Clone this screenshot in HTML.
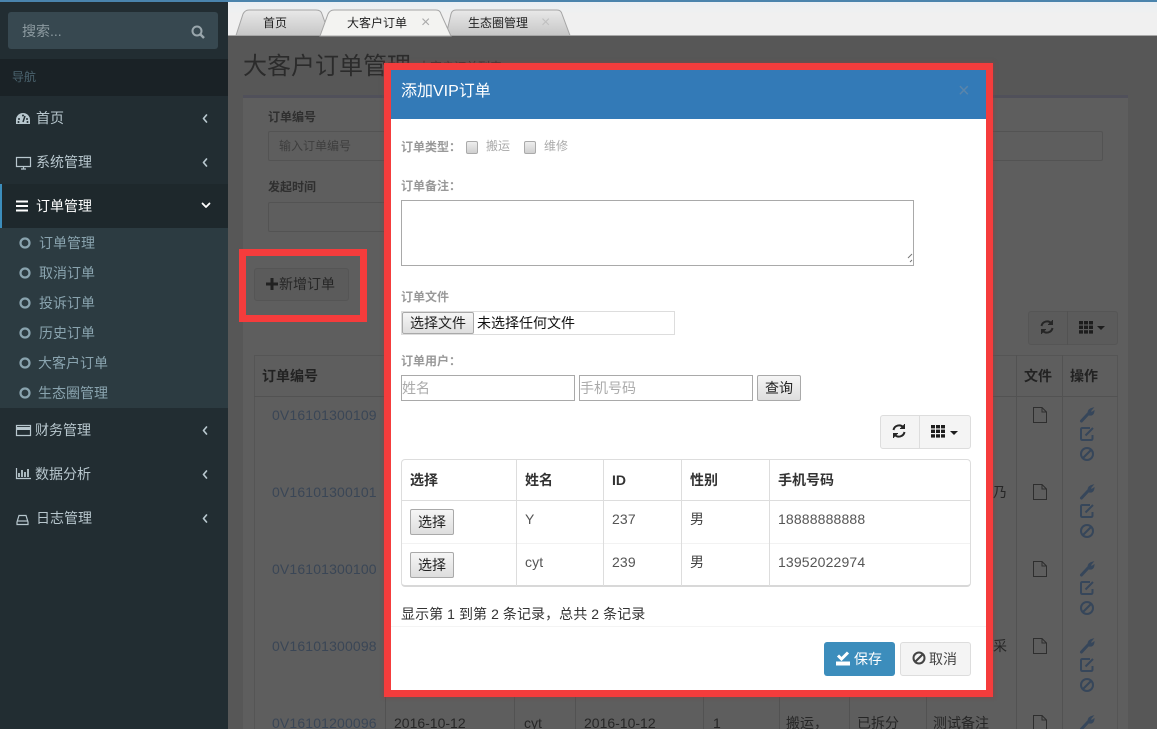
<!DOCTYPE html>
<html lang="zh"><head><meta charset="utf-8"><title>大客户订单管理</title>
<style>
html,body{margin:0;padding:0;width:1157px;height:729px;overflow:hidden;background:#575757}
body{position:relative;font-family:"Liberation Sans","Noto Sans CJK SC",sans-serif;font-size:14px}
.a{position:absolute;box-sizing:border-box}
.t{position:absolute;line-height:20px;height:20px;white-space:nowrap}
svg.o{position:absolute;left:0;top:0;width:1157px;height:729px;pointer-events:none}
.nav{color:#b8c7ce;margin-top:1px}.sub{color:#8aa4af;margin-top:1px}
.lb{font-weight:bold;font-size:12px;color:#999;margin-top:1px}
.dl{font-weight:bold;font-size:12px;color:#2f2f2f}
.id{color:#3a4656;font-size:14px;letter-spacing:.15px}
.dk{color:#262626}
.th{font-weight:bold;color:#333}
.td{color:#555;letter-spacing:.15px}
.ln{position:absolute;background:#525252}
.btn{position:absolute;box-sizing:border-box;border:1px solid #a9a9a9;border-radius:2px;background:linear-gradient(#f6f6f6,#dedede);color:#222;text-align:center;font-size:14px}
.inp{position:absolute;box-sizing:border-box;border:1px solid #a9a9a9;background:#fff}
.cb{position:absolute;box-sizing:border-box;width:12px;height:13px;border:1px solid #aaa;border-radius:2px;background:linear-gradient(#eee,#cfcfcf)}
.cl{position:absolute;background:#ddd;width:1px}
</style></head><body>

<!-- sidebar -->
<div class="a" style="left:0;top:0;width:228px;height:729px;background:#222d32"></div>
<div class="a" style="left:0;top:0;width:228px;height:2px;background:#4a84ad"></div>
<div class="a" style="left:8px;top:12px;width:210px;height:37px;background:#374850;border-radius:3px"></div>
<div class="t" style="left:22px;top:21px;color:#8d9ba1">搜索...</div>
<div class="a" style="left:0;top:59px;width:228px;height:37px;background:#1a2226"></div>
<div class="t" style="left:12px;top:67px;font-size:12px;color:#4b646f">导航</div>
<div class="a" style="left:0;top:184px;width:228px;height:44px;background:#1e282c;border-left:2px solid #3c8dbc"></div>
<div class="a" style="left:0;top:228px;width:228px;height:180px;background:#2c3b41"></div>
<div class="t nav" style="left:36px;top:107px">首页</div>
<div class="t nav" style="left:36px;top:151px">系统管理</div>
<div class="t" style="left:36px;top:196px;color:#fff">订单管理</div>
<div class="t sub" style="left:39px;top:232px">订单管理</div>
<div class="t sub" style="left:39px;top:262px">取消订单</div>
<div class="t sub" style="left:39px;top:292px">投诉订单</div>
<div class="t sub" style="left:39px;top:322px">历史订单</div>
<div class="t sub" style="left:38px;top:352px">大客户订单</div>
<div class="t sub" style="left:38px;top:382px">生态圈管理</div>
<div class="t nav" style="left:35px;top:419px">财务管理</div>
<div class="t nav" style="left:35px;top:463px">数据分析</div>
<div class="t nav" style="left:36px;top:507px">日志管理</div>

<!-- tab bar -->
<div class="a" style="left:228px;top:0;width:929px;height:36px;background:linear-gradient(#e9eff4 3px,#f0f0f0 14px);border-bottom:1px solid #a8a8a8"></div>
<div class="a" style="left:228px;top:0;width:929px;height:2px;background:#4a84ad"></div>
<svg class="o" viewBox="0 0 1157 729">
<defs><linearGradient id="g" x1="0" y1="0" x2="0" y2="1"><stop offset="0" stop-color="#e9e9e9"/><stop offset="1" stop-color="#c6c6c6"/></linearGradient></defs>
<path d="M236 35.500L243 14Q245 10 249 10H316Q321 10 322 14L327 28V35.500Z" fill="url(#g)" stroke="#a5a5a5"/>
<path d="M446 35.500L451 14Q452 10 456 10H557Q561 10 562 14L570 35.500Z" fill="url(#g)" stroke="#a5a5a5"/>
<path d="M320 36L328 14Q330 10 334 10H436Q440 10 441 14L451 36Z" fill="#f3f3f1" stroke="#a5a5a5"/>
</svg>
<div class="t" style="left:263px;top:13px;font-size:12px;color:#222">首页</div>
<div class="t" style="left:347px;top:13px;font-size:12px;color:#222">大客户订单</div>
<div class="t" style="left:421px;top:13px;font-size:16px;color:#aaa">×</div>
<div class="t" style="left:468px;top:13px;font-size:12px;color:#222">生态圈管理</div>
<div class="t" style="left:541px;top:13px;font-size:16px;color:#c0c0c0">×</div>

<!-- dimmed page -->
<div class="t" style="left:243px;top:53px;height:28px;line-height:28px;font-size:24px;color:#2b2b2b">大客户订单管理</div>
<div class="t" style="left:418px;top:57px;font-size:12px;color:#333">大客户订单列表</div>
<div class="a" style="left:243px;top:95px;width:885px;height:634px;background:#5e5e5e;border-top:3px solid #50505a"></div>
<div class="t dl" style="left:268px;top:107px">订单编号</div>
<div class="a" style="left:268px;top:131px;width:835px;height:30px;border:1px solid #535353;border-radius:2px"></div>
<div class="t" style="left:279px;top:136px;font-size:12px;color:#3e3e3e">输入订单编号</div>
<div class="t dl" style="left:268px;top:177px">发起时间</div>
<div class="a" style="left:268px;top:202px;width:130px;height:30px;border:1px solid #535353;border-radius:2px"></div>
<div class="a" style="left:254px;top:268px;width:95px;height:33px;border:1px solid #555;border-radius:3px;background:#5b5b5b"></div>
<div class="t dk" style="left:279px;top:274px">新增订单</div>
<div class="a" style="left:1028px;top:311px;width:90px;height:34px;border:1px solid #555;border-radius:3px;background:#5b5b5b"></div>
<div class="ln" style="left:1067px;top:311px;width:1px;height:34px"></div>

<!-- dim table -->
<div class="a" style="left:254px;top:355px;width:864px;height:374px;border:1px solid #555;border-bottom:0"></div>
<div class="ln" style="left:254px;top:396px;width:864px;height:1px"></div>
<div class="ln" style="left:385px;top:355px;width:1px;height:374px"></div>
<div class="ln" style="left:514px;top:355px;width:1px;height:374px"></div>
<div class="ln" style="left:575px;top:355px;width:1px;height:374px"></div>
<div class="ln" style="left:703px;top:355px;width:1px;height:374px"></div>
<div class="ln" style="left:779px;top:355px;width:1px;height:374px"></div>
<div class="ln" style="left:849px;top:355px;width:1px;height:374px"></div>
<div class="ln" style="left:926px;top:355px;width:1px;height:374px"></div>
<div class="ln" style="left:1016px;top:355px;width:1px;height:374px"></div>
<div class="ln" style="left:1062px;top:355px;width:1px;height:374px"></div>
<div class="t dk" style="left:262px;top:366px;font-weight:bold;color:#222">订单编号</div>
<div class="t dk" style="left:1024px;top:366px;font-weight:bold;color:#222">文件</div>
<div class="t dk" style="left:1070px;top:366px;font-weight:bold;color:#222">操作</div>
<div class="t id" style="left:272px;top:405px">0V16101300109</div>
<div class="t id" style="left:272px;top:482px">0V16101300101</div>
<div class="t id" style="left:272px;top:559px">0V16101300100</div>
<div class="t id" style="left:272px;top:636px">0V16101300098</div>
<div class="t id" style="left:272px;top:713px">0V16101200096</div>
<div class="t dk" style="left:394px;top:713px">2016-10-12</div>
<div class="t dk" style="left:524px;top:713px">cyt</div>
<div class="t dk" style="left:584px;top:713px">2016-10-12</div>
<div class="t dk" style="left:713px;top:713px">1</div>
<div class="t dk" style="left:786px;top:713px">搬运，</div>
<div class="t dk" style="left:857px;top:713px">已拆分</div>
<div class="t dk" style="left:933px;top:713px">测试备注</div>
<div class="t dk" style="left:993px;top:482px">乃</div>
<div class="t dk" style="left:993px;top:636px">采</div>

<svg class="o" viewBox="0 0 1157 729">
<defs>
<g id="file" fill="none" stroke="#2e2e2e" stroke-width="1"><path d="M-6.500 -7.500H2L6.500 -3V7.500H-6.500Z"/><path d="M2 -7.500V-3H6.500"/></g>
<g id="wr"><path d="M-5.500 6L1 -1" stroke="#36465a" stroke-width="3" stroke-linecap="round"/><path d="M1 -2Q1 -6 6 -7L3.500 -4L4.500 -2.500L7 -4Q6.500 1 2 0Z" fill="#36465a" stroke="#36465a"/></g>
<g id="ed" fill="none" stroke="#36465a"><path d="M3 -6H-4.500Q-6 -6 -6 -4.500V4.500Q-6 6 -4.500 6H4Q5.500 6 5.500 4.500V1" stroke-width="2"/><path d="M-1.500 1.500L6 -6" stroke-width="2"/></g>
<g id="bn" fill="none" stroke="#36465a" stroke-width="2"><circle r="6"/><path d="M-4 4L4 -4"/></g>
<g id="th" fill="#1d1d1d"><rect x="0" y="0" width="4" height="3.400"/><rect x="5" y="0" width="4" height="3.400"/><rect x="10" y="0" width="4" height="3.400"/><rect x="0" y="4.600" width="4" height="3.400"/><rect x="5" y="4.600" width="4" height="3.400"/><rect x="10" y="4.600" width="4" height="3.400"/><rect x="0" y="9.200" width="4" height="3.400"/><rect x="5" y="9.200" width="4" height="3.400"/><rect x="10" y="9.200" width="4" height="3.400"/></g>
<g id="rf" fill="none" stroke="#262626" stroke-width="2"><path d="M-5.500 -1A5.700 5.700 0 0 1 4.500 -3.500"/><path d="M5.500 1A5.700 5.700 0 0 1 -4.500 3.500"/><path d="M5.500 -7V-2.500H1" fill="#262626" stroke-width="1"/><path d="M-5.500 7V2.500H-1" fill="#262626" stroke-width="1"/></g>
<g id="cd" fill="none" stroke="#b8c7ce" stroke-width="1.700" stroke-linecap="round" stroke-linejoin="round"><path d="M1.500 -3.500L-1.500 0L1.500 3.500"/></g>
</defs>
<!-- page icons -->
<path d="M266 284H278M272 278V290" stroke="#222" stroke-width="3"/>
<use href="#rf" x="1047" y="327"/><use href="#th" x="1079" y="321"/><path d="M1097 326H1105L1101 330Z" fill="#1d1d1d"/>
<use href="#file" x="1040" y="415"/><use href="#file" x="1040" y="492"/><use href="#file" x="1040" y="569"/><use href="#file" x="1040" y="646"/><use href="#file" x="1040" y="723"/>
<use href="#wr" x="1087" y="415"/><use href="#ed" x="1087" y="434"/><use href="#bn" x="1087" y="454"/>
<use href="#wr" x="1087" y="492"/><use href="#ed" x="1087" y="511"/><use href="#bn" x="1087" y="531"/>
<use href="#wr" x="1087" y="569"/><use href="#ed" x="1087" y="588"/><use href="#bn" x="1087" y="608"/>
<use href="#wr" x="1087" y="646"/><use href="#ed" x="1087" y="665"/><use href="#bn" x="1087" y="685"/>
<use href="#wr" x="1087" y="723"/>
<!-- sidebar icons -->
<circle cx="197" cy="31" r="4.500" fill="none" stroke="#9aa7ad" stroke-width="2"/><path d="M200.500 34.500L204 38" stroke="#9aa7ad" stroke-width="2.500"/>
<path d="M16 124V120A7 7 0 0 1 30 120V124Z" fill="#b8c7ce"/><path d="M23 122L25 116" stroke="#222d32" stroke-width="1.500"/><circle cx="19" cy="119" r="1" fill="#222d32"/><circle cx="27" cy="119" r="1" fill="#222d32"/><circle cx="23" cy="115.500" r="1" fill="#222d32"/><circle cx="18.500" cy="122" r="1" fill="#222d32"/><circle cx="27.500" cy="122" r="1" fill="#222d32"/>
<path d="M16.500 157.500H30.500V166.500H16.500Z" fill="none" stroke="#b8c7ce" stroke-width="1.200"/><path d="M21 169H26M23.500 167V169" stroke="#b8c7ce" stroke-width="1.200"/>
<path d="M16 201.500H28M16 206H28M16 210.500H28" stroke="#fff" stroke-width="2"/>
<path d="M16.500 425.500H30.500V435.500H16.500Z" fill="none" stroke="#b8c7ce" stroke-width="1.200"/><rect x="16" y="427" width="15" height="3" fill="#b8c7ce"/>
<path d="M16.500 468V478.500H31" fill="none" stroke="#b8c7ce" stroke-width="1.200"/><path d="M19 477V473M22 477V470M25 477V472M28 477V469" stroke="#b8c7ce" stroke-width="1.800"/>
<path d="M17 522L19 515.500H26L28 522V524.500H17Z" fill="none" stroke="#b8c7ce" stroke-width="1.200"/><path d="M17 521H28" stroke="#b8c7ce" stroke-width="1.200"/>
<use href="#cd" x="205" y="118.500"/><use href="#cd" x="205" y="162.500"/><use href="#cd" x="205" y="430.500"/><use href="#cd" x="205" y="474.500"/><use href="#cd" x="205" y="518.500"/>
<path d="M202.500 203.500L206 207L209.500 203.500" fill="none" stroke="#fff" stroke-width="1.800" stroke-linecap="round" stroke-linejoin="round"/>
<g fill="none" stroke="#8aa4af" stroke-width="2.200"><circle cx="25" cy="243" r="4.500"/><circle cx="25" cy="273" r="4.500"/><circle cx="25" cy="303" r="4.500"/><circle cx="25" cy="333" r="4.500"/><circle cx="25" cy="363" r="4.500"/><circle cx="25" cy="393" r="4.500"/></g>
</svg>

<!-- red annotation around add button -->
<div class="a" style="left:239px;top:249px;width:128px;height:73px;border:7px solid #f53c3c"></div>

<!-- modal -->
<div class="a" style="left:384px;top:63px;width:609px;height:634px;border:7px solid #f53c3c;background:#fff;box-shadow:0 0 3px 1px rgba(150,60,60,.5)"></div>
<div class="a" style="left:391px;top:70px;width:595px;height:49px;background:#337ab7"></div>
<div class="t" style="left:401px;top:82px;font-size:16px;color:#fff">添加VIP订单</div>
<div class="t" style="left:958px;top:81px;font-size:20px;color:#5a85ab">×</div>

<div class="t lb" style="left:401px;top:136px">订单类型：</div>
<div class="cb" style="left:466px;top:141px"></div>
<div class="t" style="left:486px;top:136px;font-size:12px;color:#aaa">搬运</div>
<div class="cb" style="left:524px;top:141px"></div>
<div class="t" style="left:544px;top:136px;font-size:12px;color:#aaa">维修</div>
<div class="t lb" style="left:401px;top:175px">订单备注：</div>
<div class="inp" style="left:401px;top:200px;width:513px;height:66px"></div>
<div class="t lb" style="left:401px;top:286px">订单文件</div>
<div class="a" style="left:401px;top:311px;width:274px;height:24px;border:1px solid #ddd"></div>
<div class="btn" style="left:402px;top:312px;width:72px;height:22px;line-height:21px">选择文件</div>
<div class="t" style="left:477px;top:313px;color:#111">未选择任何文件</div>
<div class="t lb" style="left:401px;top:350px">订单用户：</div>
<div class="inp" style="left:401px;top:375px;width:174px;height:26px"></div>
<div class="t" style="left:402px;top:378px;color:#aaa">姓名</div>
<div class="inp" style="left:579px;top:375px;width:174px;height:26px"></div>
<div class="t" style="left:580px;top:378px;color:#aaa">手机号码</div>
<div class="btn" style="left:757px;top:375px;width:44px;height:26px;line-height:25px">查询</div>

<div class="a" style="left:880px;top:415px;width:91px;height:34px;background:#f4f4f4;border:1px solid #ddd;border-radius:3px"></div>
<div class="cl" style="left:919px;top:415px;height:34px"></div>

<div class="a" style="left:401px;top:459px;width:570px;height:128px;border:1px solid #ddd;border-bottom:2px solid #d8d8d8;border-radius:4px"></div>
<div class="a" style="left:402px;top:500px;width:568px;height:1px;background:#ddd"></div>
<div class="a" style="left:402px;top:543px;width:568px;height:1px;background:#f2f2f2"></div>
<div class="cl" style="left:516px;top:460px;height:126px"></div>
<div class="cl" style="left:603px;top:460px;height:126px"></div>
<div class="cl" style="left:681px;top:460px;height:126px"></div>
<div class="cl" style="left:769px;top:460px;height:126px"></div>
<div class="t th" style="left:410px;top:470px">选择</div>
<div class="t th" style="left:525px;top:470px">姓名</div>
<div class="t th" style="left:612px;top:470px">ID</div>
<div class="t th" style="left:690px;top:470px">性别</div>
<div class="t th" style="left:778px;top:470px">手机号码</div>
<div class="btn" style="left:410px;top:509px;width:44px;height:26px;line-height:24px">选择</div>
<div class="btn" style="left:410px;top:552px;width:44px;height:26px;line-height:24px">选择</div>
<div class="t td" style="left:525px;top:509px">Y</div>
<div class="t td" style="left:612px;top:509px">237</div>
<div class="t" style="left:690px;top:509px;font-size:14px;color:#444">男</div>
<div class="t td" style="left:778px;top:509px">18888888888</div>
<div class="t td" style="left:525px;top:552px">cyt</div>
<div class="t td" style="left:612px;top:552px">239</div>
<div class="t" style="left:690px;top:552px;font-size:14px;color:#444">男</div>
<div class="t td" style="left:778px;top:552px">13952022974</div>
<div class="t" style="left:401px;top:604px;color:#333;letter-spacing:.07px">显示第 1 到第 2 条记录，总共 2 条记录</div>
<div class="a" style="left:391px;top:626px;width:595px;height:1px;background:#f4f4f4"></div>
<div class="a" style="left:824px;top:642px;width:71px;height:34px;background:#3c8dbc;border-radius:3px"></div>
<div class="t" style="left:854px;top:649px;color:#fff">保存</div>
<div class="a" style="left:900px;top:642px;width:71px;height:34px;background:#f4f4f4;border:1px solid #ddd;border-radius:3px"></div>
<div class="t" style="left:929px;top:649px;color:#444">取消</div>

<svg class="o" viewBox="0 0 1157 729">
<path d="M908 258L912 254M910 262L912 260" stroke="#777" stroke-width="1"/>
<use href="#rf" x="899" y="431"/>
<use href="#th" x="931" y="425"/>
<path d="M950 431H958L954 435Z" fill="#1d1d1d"/>
<path d="M836 661.500H850V665.500H836Z" fill="#fff"/><path d="M838 655.500L841.500 659L848 652.500" fill="none" stroke="#fff" stroke-width="3"/>
<circle cx="919" cy="658" r="5.500" fill="none" stroke="#444" stroke-width="2"/><path d="M915.500 661.500L922.500 654.500" stroke="#444" stroke-width="2"/>
</svg>
</body></html>
